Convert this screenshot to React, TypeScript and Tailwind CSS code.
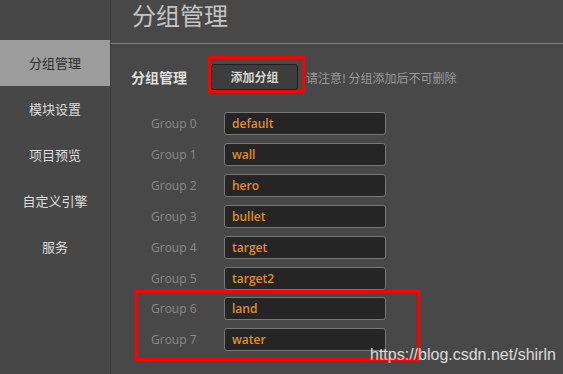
import React from "react";

const menu = ["分组管理", "模块设置", "项目预览", "自定义引擎", "服务"];

const groups = ["default", "wall", "hero", "bullet", "target", "target2", "land", "water"];

const cjk = "font-['Noto_Sans_CJK_SC',sans-serif]";
const latin = "font-['Open_Sans','Noto_Sans_CJK_SC',sans-serif]";

const GroupRow = ({ index, value }: { index: number; value: string }) => (
  <div className="flex items-center h-[31px]">
    <span className={`w-[73px] text-[12px] text-[#8a8a8a] ${latin}`}>Group {index}</span>
    <div className="w-[162px] h-[23px] flex items-center bg-[#252525] border border-[#777777] rounded-[3px] pl-[7px]">
      <span className={`text-[12px] font-semibold text-[#e38d26] ${latin}`}>{value}</span>
    </div>
  </div>
);

export default function App() {
  const active = 0;

  return (
    <div className="relative flex w-[563px] h-[374px] overflow-hidden bg-[#484848]">
      {/* menu lateral */}
      <aside className="w-[111px] shrink-0 pt-[40px] border-r border-[#3b3b3b] bg-[#474747]">
        {menu.map((item, i) => (
          <div
            key={item}
            className={`h-[46px] flex items-center justify-center text-[13px] ${cjk} ${
              i === active ? "bg-[#9c9c9c] text-[#2e2e2e]" : "text-[#dcdcdc]"
            }`}
          >
            {item}
          </div>
        ))}
      </aside>

      <main className="flex-1 flex flex-col">
        <div className="h-[44px] border-b border-[#7b7b7b] pl-[21px] flex items-start">
          <h1 className={`text-[24px] leading-[30px] text-[#c4c4c4] ${cjk}`}>分组管理</h1>
        </div>

        <div className="flex items-center mt-[12px] pl-[20px]">
          <span className={`w-[77px] mt-[5px] text-[14px] font-bold text-[#dddddd] ${cjk}`}>分组管理</span>
          <div className="border-[3px] border-[#ff0000] pt-[5px] pr-[4px]">
            <button className={`w-[87px] h-[26px] rounded-[3px] border border-[#202020] bg-[#3d3d3d] text-[12px] font-bold text-[#d6d6d6] ${cjk}`}>
              添加分组
            </button>
          </div>
          <span className={`ml-[1px] mt-[6px] text-[12px] text-[#9a9a9a] ${cjk}`}>请注意! 分组添加后不可删除</span>
        </div>

        <div className="mt-[15px] flex flex-col">
          <div className="pl-[40px]">
            {groups.slice(0, 6).map((g, i) => (
              <GroupRow key={g} index={i} value={g} />
            ))}
          </div>
          <div className="ml-[24px] -mt-[4px] w-[285px] border-[3px] border-[#ff0000] pl-[13px] pb-[3px]">
            {groups.slice(6).map((g, i) => (
              <GroupRow key={g} index={i + 6} value={g} />
            ))}
          </div>
        </div>
      </main>

      <span className="absolute left-[370px] top-[343px] text-[16px] text-white/80 font-['Liberation_Sans',sans-serif]">
        https://blog.csdn.net/shirln
      </span>
    </div>
  );
}
